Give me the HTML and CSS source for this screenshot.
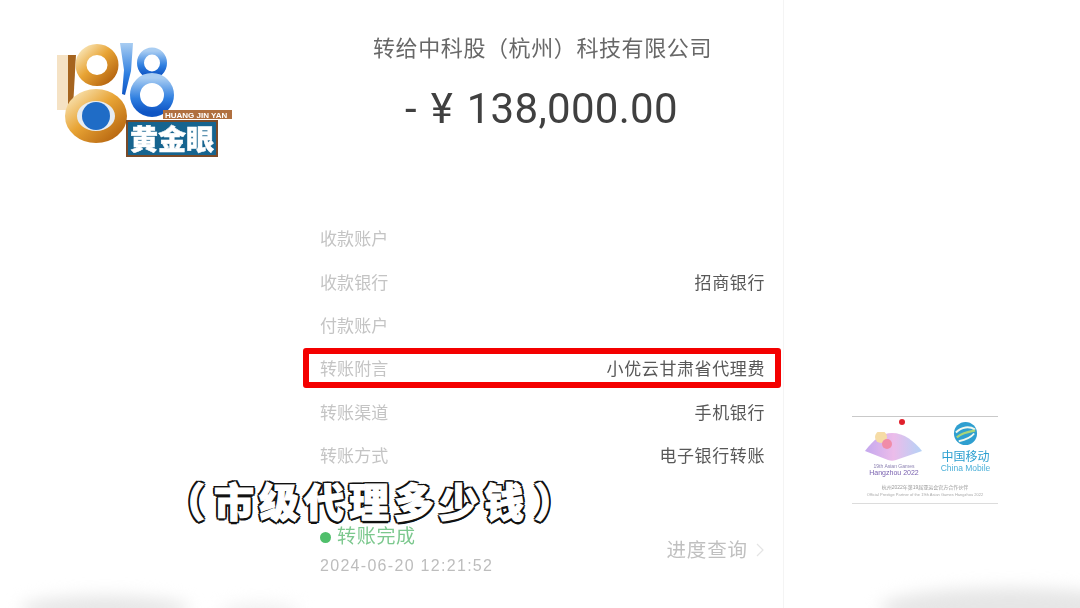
FILE: index.html
```html
<!DOCTYPE html>
<html>

<head>
  <title>黄金眼</title>
  <meta charset="utf-8">
  <link rel="stylesheet" href="styles.css">
</head>

<body>
  <div class="screen">
    <div class="shade-right"></div>
    <div class="blob blob--left"></div>
    <div class="blob blob--mid"></div>
    <div class="blob blob--right"></div>

    <!-- receipt -->
    <div class="receipt">
      <div class="payee">转给中科股（杭州）科技有限公司</div>
      <div class="amount">- ¥ 138,000.00</div>

      <div class="rows">
        <div class="row"><span class="key">收款账户</span></div>
        <div class="row"><span class="key">收款银行</span><span class="val">招商银行</span></div>
        <div class="row"><span class="key">付款账户</span></div>
        <div class="row row--marked"><span class="key">转账附言</span><span class="val">小优云甘肃省代理费</span></div>
        <div class="row"><span class="key">转账渠道</span><span class="val">手机银行</span></div>
        <div class="row"><span class="key">转账方式</span><span class="val">电子银行转账</span></div>
      </div>

      <div class="foot">
        <div>
          <div class="status"><i class="dot"></i>转账完成</div>
          <div class="time">2024-06-20 12:21:52</div>
        </div>
        <div class="progress">进度查询
          <svg class="chev" width="8" height="14" viewBox="0 0 8 14"><path d="M1 1l6 6-6 6" fill="none" stroke="#e4e4e4" stroke-width="1.2"/></svg>
        </div>
      </div>
    </div>

    <!-- subtitle -->
    <div class="subtitle"><span class="paren paren--l">（</span>市级代理多少钱<span class="paren paren--r">）</span></div>

    <!-- station logo -->
    <div class="logo">
      <svg width="176" height="116" viewBox="0 0 176 116">
        <defs>
          <linearGradient id="gold" x1="0" y1="0" x2="1" y2="1">
            <stop offset="0" stop-color="#f8e2b0"/>
            <stop offset="0.45" stop-color="#e8a435"/>
            <stop offset="1" stop-color="#b5640f"/>
          </linearGradient>
          <linearGradient id="blue" x1="0" y1="0" x2="0" y2="1">
            <stop offset="0" stop-color="#a9cdf2"/>
            <stop offset="0.6" stop-color="#2f7fe0"/>
            <stop offset="1" stop-color="#0f55c4"/>
          </linearGradient>
        </defs>
        <path d="M1 14h18l-2 51-2 4H1z" fill="#f5e2c4"/>
        <path d="M12 14h8l-3 52h-5z" fill="#a5641f"/>
        <ellipse cx="41" cy="24" rx="16" ry="15.5" fill="#fff" stroke="url(#gold)" stroke-width="11"/>
        <path d="M64 2h13l-2 28-6 24-3-1 2-24z" fill="url(#blue)"/>
        <ellipse cx="96" cy="22" rx="11.5" ry="12" fill="#fff" stroke="url(#blue)" stroke-width="7"/>
        <ellipse cx="96" cy="54" rx="17" ry="17" fill="#fff" stroke="url(#blue)" stroke-width="10"/>
        <ellipse cx="40" cy="75" rx="25" ry="21" fill="#e6ecf2" stroke="url(#gold)" stroke-width="12"/>
        <circle cx="40" cy="75" r="14" fill="#1f6cc6"/>
        <rect x="71" y="80" width="90" height="35" fill="#16648f" stroke="#7a4a28" stroke-width="2"/>
        <rect x="107" y="69" width="69" height="9" fill="#b0703f"/>
        <text x="109" y="76.5" class="logo-en">HUANG JIN YAN</text>
        <text x="74" y="109" class="logo-cn">黄金眼</text>
      </svg>
    </div>

    <!-- sponsor card -->
    <div class="sponsor">
      <div class="sponsor-top">
        <div class="games">
          <i class="sun"></i>
          <svg width="60" height="29" viewBox="0 5 60 29">
            <defs>
              <linearGradient id="fan" x1="0" y1="0" x2="1" y2="0">
                <stop offset="0" stop-color="#c4a8ee"/>
                <stop offset="0.5" stop-color="#ecbcea"/>
                <stop offset="1" stop-color="#b4d2f6"/>
              </linearGradient>
            </defs>
            <path d="M1 24C10 12 18 6 28 6c12 0 22 8 30 18l-26 9c-3 1-5 1-8 0z" fill="url(#fan)"/>
            <circle cx="17" cy="10" r="6" fill="#f6dca6"/>
            <circle cx="23" cy="17" r="5" fill="#f08ca8"/>
          </svg>
          <div class="games-a">19th Asian Games</div>
          <div class="games-b">Hangzhou 2022</div>
        </div>
        <div class="mobile">
          <svg width="25" height="25" viewBox="0 0 26 26">
            <circle cx="13" cy="13" r="12" fill="#2f9fd0"/>
            <path d="M3 12c6-6 14-7 20-3" fill="none" stroke="#f2f8ee" stroke-width="2"/>
            <path d="M4 17c6-5 13-6 19-7" fill="none" stroke="#a8d47a" stroke-width="2.4"/>
            <path d="M6 21c5-1 12-3 16-8" fill="none" stroke="#f2f8ee" stroke-width="2"/>
          </svg>
          <div class="mobile-cn">中国移动</div>
          <div class="mobile-en">China Mobile</div>
        </div>
      </div>
      <div class="sponsor-cn">杭州2022年第19届亚运会官方合作伙伴</div>
      <div class="sponsor-en">Official Prestige Partner of the 19th Asian Games Hangzhou 2022</div>
    </div>
  </div>
</body>

</html>
```

FILE: styles.css
```css
* {
  box-sizing: border-box;
}

body {
  margin: 0;
  background: #fff;
  font-family: "Liberation Sans", "Noto Sans CJK SC", sans-serif;
}

.screen {
  position: relative;
  width: 1080px;
  height: 608px;
  overflow: hidden;
  background: #fff;
}

.shade-right {
  position: absolute;
  left: 783px;
  top: 0;
  right: 0;
  bottom: 0;
  border-left: 1px solid #f4f4f4;
}

.blob {
  position: absolute;
  background: #e6e6e6;
  border-radius: 50%;
  filter: blur(8px);
}

.blob--left {
  left: 20px;
  bottom: -14px;
  width: 170px;
  height: 26px;
}

.blob--mid {
  left: 220px;
  bottom: -12px;
  width: 80px;
  height: 16px;
  background: #efefef;
}

.blob--right {
  left: 880px;
  bottom: -20px;
  width: 260px;
  height: 40px;
}

/* receipt */
.receipt {
  position: relative;
  width: 1080px;
  height: 608px;
  padding: 34px 316px 0 320px;
  filter: blur(0.5px);
}

.payee {
  margin-left: 53px;
  width: 380px;
  font-size: 22px;
  line-height: 30px;
  color: #686868;
  white-space: nowrap;
  letter-spacing: 0.6px;
}

.amount {
  margin: 20px 0 0 85px;
  font-size: 42px;
  line-height: 50px;
  font-family: "Roboto", sans-serif;
  color: #404040;
  white-space: nowrap;
  letter-spacing: 0.3px;
  word-spacing: 3px;
}

.rows {
  margin-top: 82px;
  width: 445px;
}

.row {
  display: flex;
  justify-content: space-between;
  align-items: center;
  height: 43.4px;
}

.row--marked {
  position: relative;
}

.row--marked:before {
  content: "";
  position: absolute;
  left: -17px;
  right: -16px;
  top: 2px;
  bottom: 2px;
  border: 6px solid #f40000;
  border-radius: 3px;
}

.key {
  font-size: 17px;
  color: #c4c4c4;
  letter-spacing: 0.1px;
}

.val {
  font-size: 17px;
  color: #585858;
  letter-spacing: 0.6px;
}

.foot {
  display: flex;
  justify-content: space-between;
  align-items: flex-end;
  margin-top: 49px;
  width: 444px;
}

.status {
  display: flex;
  align-items: center;
  font-size: 19px;
  line-height: 24px;
  color: #7cc88e;
  letter-spacing: 0.7px;
}

.dot {
  width: 11px;
  height: 11px;
  margin-right: 6px;
  border-radius: 50%;
  background: #4fbf6b;
}

.time {
  margin-top: 7px;
  font-size: 16px;
  line-height: 20px;
  color: #bdbdbd;
  letter-spacing: 1.3px;
}

.progress {
  display: flex;
  align-items: center;
  gap: 8px;
  margin-bottom: 14px;
  font-size: 19.5px;
  line-height: 24px;
  color: #c0c0c0;
  letter-spacing: 0.9px;
}

/* subtitle */
.subtitle {
  position: absolute;
  left: 165px;
  top: 476px;
  display: flex;
  font-size: 40px;
  line-height: 54px;
  font-weight: 900;
  color: #fff;
  white-space: nowrap;
  letter-spacing: 5px;
  -webkit-text-stroke: 1.2px #fff;
  text-shadow: 2.5px 0 #111, -2.5px 0 #111, 0 2.5px #111, 0 -2.5px #111,
    2px 2px #111, -2px 2px #111, 2px -2px #111, -2px -2px #111;
}

.paren--l {
  margin-right: 4px;
}

.paren--r {
  margin-left: 5px;
}

/* logo */
.logo {
  position: absolute;
  left: 56px;
  top: 41px;
  filter: blur(0.5px);
}

.logo svg {
  display: block;
  overflow: visible;
}

.logo-en {
  font-size: 8px;
  font-weight: 700;
  fill: #fff;
  font-family: "Liberation Sans", sans-serif;
}

.logo-cn {
  font-size: 28px;
  font-weight: 900;
  fill: #fff;
  stroke: #fff;
  stroke-width: 0.5px;
  font-family: "Noto Sans CJK SC", sans-serif;
}

/* sponsor */
.sponsor {
  position: absolute;
  left: 852px;
  top: 416px;
  width: 146px;
  height: 88px;
  padding-top: 4px;
  background: #fff;
  border-top: 1px solid #c9c9c9;
  border-bottom: 1px solid #dcdcdc;
  text-align: center;
  filter: blur(0.4px);
}

.sponsor-top {
  display: flex;
  height: 63px;
}

.games {
  position: relative;
  width: 84px;
  padding-top: 11px;
}

.games svg,
.mobile svg {
  display: block;
  margin: 0 auto;
}

.sun {
  position: absolute;
  left: 47px;
  top: -2px;
  width: 6px;
  height: 6px;
  border-radius: 50%;
  background: #e0202c;
}

.games-a {
  margin-top: 2px;
  font-size: 5px;
  line-height: 6px;
  color: #8a7fb0;
  white-space: nowrap;
}

.games-b {
  font-size: 7px;
  line-height: 7px;
  color: #7a62b0;
  white-space: nowrap;
}

.mobile {
  flex: 1;
  margin-right: 3px;
}

.mobile-cn {
  margin-top: 4px;
  font-size: 12px;
  line-height: 14px;
  color: #2a9fd0;
  white-space: nowrap;
}

.mobile-en {
  font-size: 8.5px;
  line-height: 9px;
  color: #4cb0d8;
  white-space: nowrap;
}

.sponsor-cn {
  font-size: 5px;
  line-height: 7px;
  color: #999;
}

.sponsor-en {
  margin-top: 1px;
  font-size: 4px;
  line-height: 6px;
  color: #aaa;
  white-space: nowrap;
}
```
